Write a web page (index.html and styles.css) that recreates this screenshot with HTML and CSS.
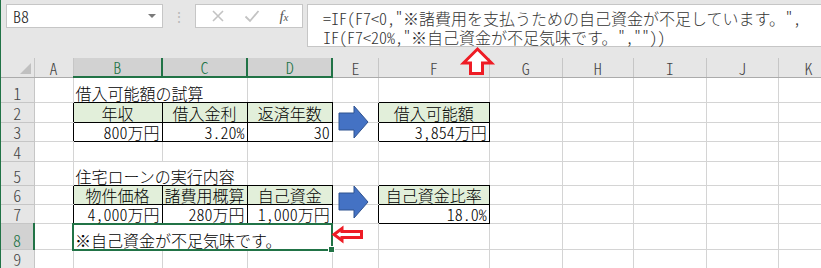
FILE: index.html
```html
<!DOCTYPE html>
<html lang="ja">
<head>
    <meta charset="utf-8">
    <title>住宅ローンの試算</title>
    <link rel="stylesheet" href="styles.css">
</head>
<body>
<div class="window">
    <div class="formula-bar">
        <div class="name-box"><span>B8</span><span class="drop"></span></div>
        <div class="grip">⋮</div>
        <div class="fx-box">
            <svg class="tool" width="14" height="14" viewBox="0 0 14 14"><path d="M2 2 L12 12 M12 2 L2 12" stroke="#c3c3c3" stroke-width="1.6" fill="none"/></svg>
            <svg class="tool" width="16" height="14" viewBox="0 0 16 14"><path d="M1.5 7.5 L6 12 L14.5 2" stroke="#c3c3c3" stroke-width="1.8" fill="none"/></svg>
            <span class="fx">f<small>x</small></span>
        </div>
        <div class="formula">=IF(F7&lt;0,"※諸費用を支払うための自己資金が不足しています。",<br>IF(F7&lt;20%,"※自己資金が不足気味です。",""))</div>
    </div>

    <table class="sheet">
        <colgroup>
            <col class="c-row"><col class="c-a"><col class="c-b"><col class="c-c"><col class="c-d"><col class="c-e">
            <col class="c-f"><col class="c-g"><col class="c-h"><col class="c-i"><col class="c-j"><col class="c-k">
        </colgroup>
        <tr class="head">
            <th class="corner"><span class="tri"></span></th>
            <th>A</th><th class="sel">B</th><th class="sel">C</th><th class="sel">D</th><th>E</th>
            <th>F</th><th>G</th><th>H</th><th>I</th><th>J</th><th>K</th>
        </tr>
        <tr class="h25">
            <th>1</th><td></td><td colspan="2" class="bb">借入可能額の試算</td><td class="bb"></td><td></td>
            <td class="bb"></td><td></td><td></td><td></td><td></td><td></td>
        </tr>
        <tr class="h20">
            <th>2</th><td class="rb"></td><td class="hd">年収</td><td class="hd">借入金利</td><td class="hd">返済年数</td><td class="rb"></td>
            <td class="hd">借入可能額</td><td></td><td></td><td></td><td></td><td></td>
        </tr>
        <tr class="h19">
            <th>3</th><td class="rb"></td><td class="num">800万円</td><td class="num">3.20%</td><td class="num">30</td><td class="rb"></td>
            <td class="num">3,854万円</td><td></td><td></td><td></td><td></td><td></td>
        </tr>
        <tr class="h20">
            <th>4</th><td></td><td></td><td></td><td></td><td></td>
            <td></td><td></td><td></td><td></td><td></td><td></td>
        </tr>
        <tr class="h24">
            <th>5</th><td></td><td colspan="2" class="bb">住宅ローンの実行内容</td><td class="bb"></td><td></td>
            <td class="bb"></td><td></td><td></td><td></td><td></td><td></td>
        </tr>
        <tr class="h19">
            <th>6</th><td class="rb"></td><td class="hd">物件価格</td><td class="hd">諸費用概算</td><td class="hd">自己資金</td><td class="rb"></td>
            <td class="hd">自己資金比率</td><td></td><td></td><td></td><td></td><td></td>
        </tr>
        <tr class="h19">
            <th>7</th><td class="rb"></td><td class="num">4,000万円</td><td class="num">280万円</td><td class="num">1,000万円</td><td class="rb"></td>
            <td class="num">18.0%</td><td></td><td></td><td></td><td></td><td></td>
        </tr>
        <tr class="h26">
            <th class="sel">8</th><td></td><td colspan="3" class="active">※自己資金が不足気味です。<span class="handle"></span></td><td></td>
            <td></td><td></td><td></td><td></td><td></td><td></td>
        </tr>
        <tr class="h19">
            <th>9</th><td></td><td></td><td></td><td></td><td></td>
            <td></td><td></td><td></td><td></td><td></td><td></td>
        </tr>
    </table>

    <!-- 図形 -->
    <svg class="shape arrow-1" width="32" height="35" viewBox="0 0 32 35"><polygon points="1,8 16,8 16,1 30,17 16,33 16,25 1,25" fill="#4472c4" stroke="#2f528f" stroke-width="1"/></svg>
    <svg class="shape arrow-2" width="32" height="35" viewBox="0 0 32 35"><polygon points="1,8 16,8 16,1 30,17 16,33 16,25 1,25" fill="#4472c4" stroke="#2f528f" stroke-width="1"/></svg>
    <svg class="shape arrow-up" width="37" height="34" viewBox="0 0 37 34"><polygon points="18.5,5 32.5,19 23.5,19 23.5,29.5 11.5,29.5 11.5,19 4.5,19" fill="#fff" stroke="#ee1c25" stroke-width="3"/></svg>
    <svg class="shape arrow-left" width="35" height="20" viewBox="0 0 35 20"><polygon points="4,9.5 12,3.5 12,6.5 31.5,6.5 31.5,12.5 12,12.5 12,15.5" fill="#fff" stroke="#ee1c25" stroke-width="3"/></svg>
</div>
</body>
</html>
```

FILE: styles.css
```css
body {
    margin: 0;
    background-color: #fff;
    font-family: "Noto Sans CJK JP", sans-serif;
    font-weight: 300;
    font-feature-settings: "hwid" 1;
    overflow: hidden;
}

.window {
    position: relative;
    width: 821px;
    height: 268px;
    border-left: 1px solid #217346;
    box-sizing: border-box;
    overflow: hidden;
}

/* 数式バー */
.formula-bar {
    display: flex;
    align-items: flex-start;
    height: 58px;
    padding: 4px 0 0 5px;
    box-sizing: border-box;
    background-color: #e6e6e6;
}

.name-box {
    width: 157px;
    height: 24px;
    display: flex;
    align-items: center;
    justify-content: space-between;
    padding: 0 6px;
    box-sizing: border-box;
    background-color: #fff;
    border: 1px solid #c6c6c6;
    font-size: 16px;
    color: #222;
}

.drop {
    width: 0;
    height: 0;
    border-left: 4px solid transparent;
    border-right: 4px solid transparent;
    border-top: 4px solid #7a7a7a;
}

.grip {
    width: 32px;
    text-align: center;
    color: #b8b8b8;
    font-size: 14px;
    line-height: 24px;
}

.fx-box {
    width: 108px;
    height: 24px;
    display: flex;
    align-items: center;
    justify-content: space-around;
    padding: 0 4px 0 6px;
    box-sizing: border-box;
    background-color: #fff;
    border: 1px solid #c6c6c6;
}

.fx {
    font-family: "Liberation Serif", serif;
    font-style: italic;
    font-size: 15px;
    color: #555;
}

.fx small {
    font-size: 11px;
}

.formula {
    flex: 1;
    height: 43px;
    margin-left: 4px;
    padding: 4px 0 0 15px;
    box-sizing: border-box;
    background-color: #fff;
    border: 1px solid #c6c6c6;
    border-right: none;
    font-size: 16px;
    line-height: 19px;
    color: #333;
    white-space: nowrap;
}

/* シート */
.sheet {
    border-collapse: collapse;
    table-layout: fixed;
    width: 838px;
    font-size: 16px;
    color: #000;
}

.c-row { width: 33px; }
.c-a { width: 39px; }
.c-b { width: 89px; }
.c-c { width: 85px; }
.c-d { width: 85px; }
.c-e { width: 46px; }
.c-f { width: 111px; }
.c-g { width: 73px; }
.c-h { width: 71px; }
.c-i { width: 73px; }
.c-j { width: 72px; }
.c-k { width: 60px; }

.sheet th {
    background-color: #e6e6e6;
    border: 1px solid #c6c6c6;
    font-weight: 300;
    color: #444;
    padding: 0;
    line-height: 17px;
    vertical-align: bottom;
}

.sheet .head th {
    height: 18px;
    border-top: none;
    border-bottom-color: #ababab;
}

.sheet .head th.corner {
    position: relative;
    border-left: none;
}

.tri {
    position: absolute;
    right: 3px;
    bottom: 3px;
    width: 0;
    height: 0;
    border-left: 11px solid transparent;
    border-bottom: 11px solid #c0c0c0;
}

.sheet .head th.sel {
    background-color: #d2d2d2;
    color: #217346;
    border-bottom: 2px solid #217346;
}

.sheet th.sel {
    background-color: #d2d2d2;
    color: #217346;
    border-right: 2px solid #217346;
}

.sheet tr > th:first-child {
    border-left: none;
}

.sheet td {
    border: 1px solid #d4d4d4;
    padding: 0 2px;
    white-space: nowrap;
    vertical-align: bottom;
    line-height: 18px;
}

.h19 { height: 19px; }
.h20 { height: 20px; }
.h24 { height: 24px; }
.h25 { height: 25px; }
.h26 { height: 26px; }

.sheet td.hd {
    background-color: #e2efda;
    border: 1px solid #000;
    text-align: center;
}

.sheet td.num {
    border: 1px solid #000;
    text-align: right;
}

.sheet td.rb {
    border-right-color: #000;
}

.sheet td.bb {
    border-bottom-color: #000;
}

.sheet td.active {
    position: relative;
    border: 2px solid #217346;
    padding-left: 1px;
}

.handle {
    position: absolute;
    right: -4px;
    bottom: -4px;
    width: 5px;
    height: 5px;
    background-color: #217346;
    border: 1px solid #fff;
}

/* 図形 */
.shape {
    position: absolute;
}

.arrow-1 { left: 337px; top: 105px; }
.arrow-2 { left: 337px; top: 185px; }
.arrow-up { left: 458px; top: 44px; }
.arrow-left { left: 329px; top: 225px; }
```
